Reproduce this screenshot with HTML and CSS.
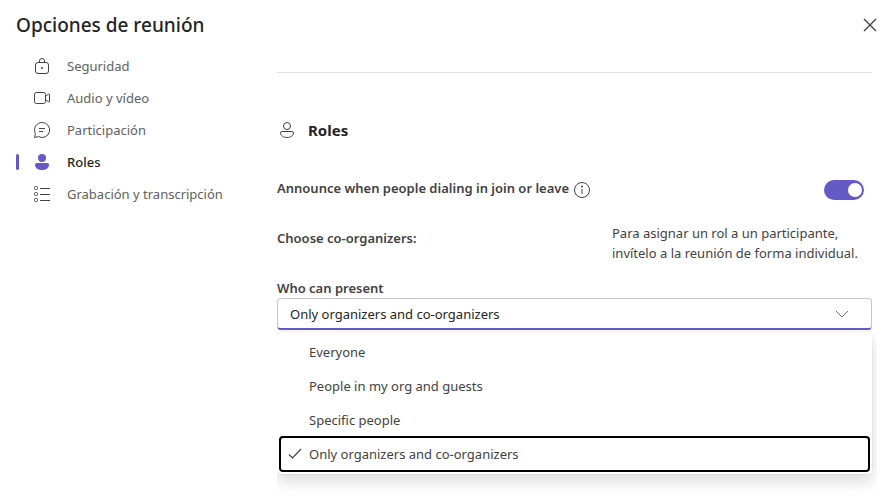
FILE: index.html
```html
<!DOCTYPE html>
<html lang="es">
<head>
<meta charset="utf-8">
<meta name="viewport" content="width=device-width, initial-scale=1">
<title>Opciones de reunión</title>
<link rel="stylesheet" href="styles.css">
</head>
<body>
<header class="header">
  <h1 class="title">Opciones de reunión</h1>
  <button class="close" type="button" aria-label="Cerrar">
    <svg width="14" height="14" viewBox="0 0 14 14"><path d="M1 1l12 12M13 1L1 13"/></svg>
  </button>
</header>
<div class="layout">
  <nav class="nav">
    <a class="nav-item" href="#seguridad">
      <svg class="icon" viewBox="0 0 18 18"><rect x="2.5" y="5.5" width="13" height="11" rx="2.5"/><path d="M6.5 5.5V4a2.500 2.500 0 0 1 5 0v1.500"/><circle class="solid" cx="9" cy="11" r="1"/></svg>
      <span>Seguridad</span>
    </a>
    <a class="nav-item" href="#audio">
      <svg class="icon" viewBox="0 0 18 18"><rect x="1.5" y="3.5" width="11" height="11" rx="2"/><path d="M12.5 7.5L15.300 5.200q1.200-.700 1.200.600v6.400q0 1.300-1.200.600L12.500 10.500"/></svg>
      <span>Audio y vídeo</span>
    </a>
    <a class="nav-item" href="#participacion">
      <svg class="icon" viewBox="0 0 18 18"><path d="M9.200 1.500a7.500 7.500 0 1 1-3.600 14.100L1.500 16.500l.900-4A7.500 7.500 0 0 1 9.200 1.500zM6 7.500h6M6 10.500h4"/></svg>
      <span>Participación</span>
    </a>
    <a class="nav-item active" href="#roles" aria-current="page">
      <svg class="icon" viewBox="0 0 18 18"><circle cx="9" cy="5" r="4"/><path d="M4 10h10a2 2 0 0 1 2 2c0 3-3 5-7 5s-7-2-7-5a2 2 0 0 1 2-2z"/></svg>
      <span>Roles</span>
    </a>
    <a class="nav-item" href="#grabacion">
      <svg class="icon" viewBox="0 0 18 18"><rect x="1.5" y="1.5" width="3" height="3" rx="1"/><rect x="1.5" y="7.500" width="3" height="3" rx="1"/><rect x="1.5" y="13.500" width="3" height="3" rx="1"/><path d="M7 3.500h10M7 9.500h10M7 15.500h10"/></svg>
      <span>Grabación y transcripción</span>
    </a>
  </nav>
  <main class="main" id="roles">
    <hr class="rule">
    <h2 class="section-title">
      <svg class="icon" viewBox="0 0 18 18"><circle cx="9" cy="5" r="3.500"/><path d="M4 10.500h10a1.500 1.500 0 0 1 1.500 1.500c0 2.500-3 4.500-6.500 4.500s-6.500-2-6.500-4.500a1.500 1.500 0 0 1 1.500-1.500z"/></svg>
      <span>Roles</span>
    </h2>
    <div class="row announce">
      <div class="announce-label">
        <label class="label" for="announce">Announce when people dialing in join or leave</label>
        <svg class="icon" viewBox="0 0 18 18"><circle cx="9" cy="9" r="7.500"/><path d="M9 8v5"/><circle class="solid" cx="9" cy="5.500" r="1"/></svg>
      </div>
      <input class="switch" id="announce" type="checkbox" role="switch" checked>
    </div>
    <div class="row organizers">
      <span class="label">Choose co-organizers:</span>
      <p class="note">Para asignar un rol a un participante, invítelo a la reunión de forma individual.</p>
    </div>
    <label class="label present-label" for="present">Who can present</label>
    <div class="dropdown">
      <select class="select" id="present">
        <option>Everyone</option>
        <option>People in my org and guests</option>
        <option>Specific people</option>
        <option selected>Only organizers and co-organizers</option>
      </select>
      <svg class="chevron" width="14" height="8" viewBox="0 0 14 8"><path d="M1 1l6 6 6-6"/></svg>
      <ul class="menu" role="listbox" aria-label="Who can present">
        <li class="option" role="option">Everyone</li>
        <li class="option" role="option">People in my org and guests</li>
        <li class="option" role="option">Specific people</li>
        <li class="option selected" role="option" aria-selected="true">
          <svg class="check" width="14" height="12" viewBox="0 0 14 12"><path d="M1 6.500l3.500 3.500L13 1"/></svg>Only organizers and co-organizers</li>
      </ul>
    </div>
  </main>
</div>
</body>
</html>
```
FILE: styles.css
```css
* {
  box-sizing: border-box;
}

body {
  margin: 0;
  min-height: 100vh;
  display: flex;
  flex-direction: column;
  background: #fff;
  color: #424242;
  font: 13px/20px "Segoe UI", "Noto Sans", sans-serif;
}

svg {
  fill: none;
  stroke: #424242;
}

.solid {
  fill: #424242;
  stroke: none;
}

.icon {
  flex: none;
  width: 18px;
  height: 18px;
}

.header {
  display: flex;
  align-items: center;
  justify-content: space-between;
  height: 50px;
  padding: 0 16px;
}

.title {
  margin: 0;
  color: #242424;
  font-size: 19px;
  font-weight: 500;
  line-height: 28px;
}

.close {
  display: flex;
  padding: 2px;
  border: 0;
  background: none;
}

.close svg {
  stroke-width: 1.4;
}

.layout {
  flex: 1;
  display: grid;
  grid-template-columns: 277px minmax(0, 1fr);
  padding-right: 18px;
}

.nav-item {
  display: flex;
  align-items: center;
  gap: 16px;
  height: 32px;
  padding-left: 33px;
  color: #616161;
  text-decoration: none;
}

.active {
  padding-left: 16px;
  color: #242424;
  font-weight: 500;
}

.active::before {
  content: "";
  width: 3px;
  height: 16px;
  margin-right: -2px;
  border-radius: 2px;
  background: #655ac4;
}

.active .icon {
  fill: #655ac4;
  stroke: none;
}

.main {
  padding: 22px 5px 0 0;
  overflow: hidden;
}

.rule {
  margin: 0;
  border: 0;
  border-top: 1px solid #e0e0e0;
}

.section-title {
  display: flex;
  align-items: center;
  gap: 12px;
  margin: 47px 0 0;
  padding-left: 1px;
  color: #242424;
  font-size: 15px;
  font-weight: 700;
  line-height: 20px;
}

.row {
  display: flex;
  align-items: flex-start;
  justify-content: space-between;
}

.label {
  font-weight: 600;
}

.announce {
  margin-top: 38px;
}

.announce-label {
  display: flex;
  gap: 4px;
  padding-bottom: 2px;
}

.announce-label .icon {
  margin-top: 3px;
}

.switch {
  appearance: none;
  display: flex;
  justify-content: flex-end;
  width: 40px;
  height: 20px;
  margin: 2px 8px 0 0;
  padding: 3px 2px;
  border-radius: 10px;
  background: #655ac4;
}

.switch::before {
  content: "";
  width: 14px;
  height: 14px;
  border-radius: 50%;
  background: #fff;
}

.organizers {
  margin-top: 22px;
}

.organizers .label {
  padding-top: 5px;
}

.note {
  width: 260px;
  margin: 0;
}

.present-label {
  display: block;
  margin-top: 15px;
}

.dropdown {
  position: relative;
}

.select {
  appearance: none;
  display: block;
  width: 100%;
  height: 32px;
  padding: 0 12px;
  border: 1px solid #c7c7c7;
  border-bottom: 2px solid #655ac4;
  border-radius: 4px;
  background: #fff;
  color: #242424;
  font: inherit;
}

.chevron {
  position: absolute;
  top: 12px;
  right: 23px;
  stroke: #707070;
  pointer-events: none;
}

.menu {
  position: absolute;
  top: 34px;
  left: 0;
  right: 0;
  margin: 0;
  padding: 3px;
  border-radius: 4px;
  background: #fff;
  box-shadow: 0 0 2px rgba(0, 0, 0, 0.12), 0 8px 16px rgba(0, 0, 0, 0.14);
  list-style: none;
}

.option {
  position: relative;
  padding: 7px 29px;
}

.selected {
  border-radius: 3px;
  outline: 2px solid #000;
  outline-offset: -1px;
}

.check {
  position: absolute;
  top: 11px;
  left: 8px;
  stroke-width: 1.2;
}
```
